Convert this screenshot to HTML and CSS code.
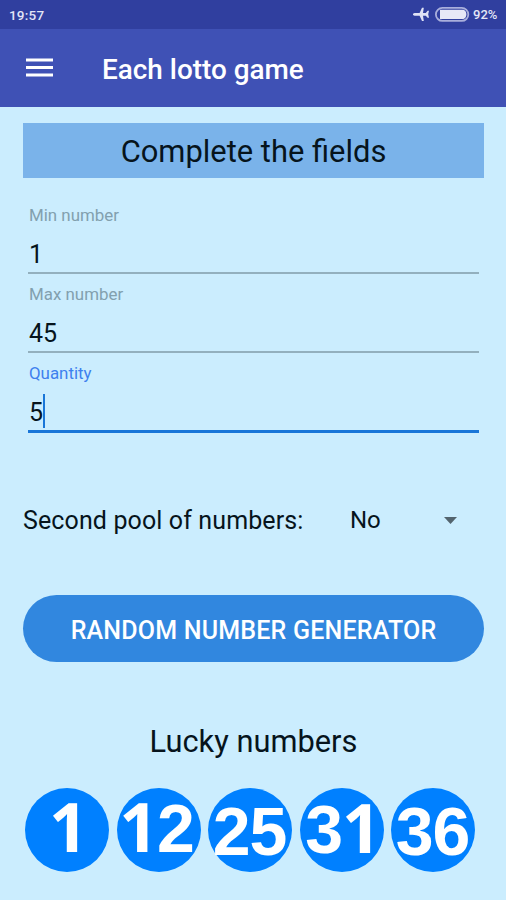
FILE: index.html
```html
<!DOCTYPE html>
<html lang="en">
<head>
<meta charset="utf-8">
<title>Each lotto game</title>
<link rel="stylesheet" href="styles.css">
</head>
<body>
<div class="status">
  <span class="clock">19:57</span>
  <svg class="plane" width="17" height="15" viewBox="0 0 17 15"><path d="M0 6.8 L1.5 6 H6.6 L9 0.8 H10.8 L10 6 H12.8 L14.6 3.8 H16 L15.2 7.3 L16 10.8 H14.6 L12.8 8.8 H10 L10.8 14 H9 L6.6 8.8 H1.5 L0 8 Z" fill="#dfe2f5"/></svg>
  <svg class="battery" width="35" height="15" viewBox="0 0 35 15"><rect x="0.9" y="0.9" width="32.4" height="13" rx="6.5" fill="none" stroke="#a9afdc" stroke-width="1.8"/><path d="M5 2.8H28.5Q31.4 4 31.4 7.4T28.5 12H5Z" fill="#e6e8f6"/></svg>
  <span class="level">92%</span>
</div>
<header class="bar">
  <svg class="menu" width="27" height="20" viewBox="0 0 27 20"><path d="M0 2H27M0 9.5H27M0 17H27" stroke="#fff" stroke-width="3.2"/></svg>
  <h1 class="title">Each lotto game</h1>
</header>
<main class="content">
  <h2 class="heading">Complete the fields</h2>
  <form class="fields">
    <div class="field"><label class="label">Min number</label><div class="value">1</div></div>
    <div class="field"><label class="label">Max number</label><div class="value">45</div></div>
    <div class="field active"><label class="label">Quantity</label><div class="value">5<i class="caret"></i></div></div>
  </form>
  <div class="pool">
    <span class="question">Second pool of numbers:</span>
    <span class="answer">No</span>
    <svg class="arrow" width="13" height="7" viewBox="0 0 13 7"><path d="M0 0H13L6.5 7Z" fill="#53646e"/></svg>
  </div>
  <div class="button">RANDOM NUMBER GENERATOR</div>
  <h2 class="lucky">Lucky numbers</h2>
  <div class="balls">
    <div class="ball high single"><span><b class="one">1</b></span></div>
    <div class="ball high pair"><span><b class="one">1</b>2</span></div>
    <div class="ball low"><span>25</span></div>
    <div class="ball single"><span>3<b class="one">1</b></span></div>
    <div class="ball low"><span>36</span></div>
  </div>
</main>
</body>
</html>
```
FILE: styles.css
```css
* { box-sizing: border-box; }
body {
  margin: 0;
  height: 900px;
  overflow: hidden;
  background: #cbedfe;
  color: #06141c;
  font-family: Roboto, "Liberation Sans", sans-serif;
}
h1, h2 { margin: 0; font-weight: 400; white-space: nowrap; }
svg { display: block; flex: none; }
.status {
  display: flex;
  align-items: center;
  height: 29px;
  padding: 0 8px 0 9px;
  background: #303f9f;
  color: #e3e6f6;
  font-size: 13.5px;
  font-weight: 500;
}
.clock { margin-right: auto; letter-spacing: 0.2px; }
.plane { margin-right: 5px; }
.battery { margin-right: 3px; }
.level { width: 25px; font-size: 13px; white-space: nowrap; }
.bar {
  display: flex;
  align-items: center;
  height: 78px;
  padding: 2px 0 0 26px;
  background: #3f51b5;
}
.menu { margin-bottom: 2px; }
.title {
  margin-left: 49px;
  color: #fff;
  font-size: 27.9px;
  font-weight: 500;
}
.content { padding: 16px 22px 0 23px; }
.heading {
  height: 55px;
  line-height: 57px;
  background: #7ab3ea;
  font-size: 30.9px;
  text-align: center;
}
.fields { padding: 17px 5px 0; }
.field {
  height: 79px;
  border-bottom: 2px solid #93b0be;
}
.label {
  display: block;
  padding: 9px 0 0 1px;
  height: 40px;
  line-height: 22px;
  color: #82a0ae;
  font-size: 16.9px;
}
.value {
  display: flex;
  align-items: center;
  height: 37px;
  padding: 1px 0 0 1px;
  font-size: 25px;
}
.active { border-bottom: 3px solid #1976d8; height: 80px; }
.active .label { color: #3e80ee; }
.caret { width: 2px; height: 34px; margin-bottom: 2px; background: #1976d8; }
.pool {
  display: flex;
  align-items: center;
  height: 40px;
  margin-top: 67px;
  font-size: 25px;
  white-space: nowrap;
}
.question { width: 327px; letter-spacing: 0.12px; }
.answer { width: 94px; font-size: 24px; }
.button {
  height: 67px;
  margin-top: 55px;
  border-radius: 34px;
  background: #3187df;
  color: #fff;
  font-size: 25px;
  font-weight: 500;
  letter-spacing: 0.2px;
  line-height: 71px;
  text-align: center;
  white-space: nowrap;
}
.lucky {
  height: 50px;
  margin-top: 54px;
  line-height: 52px;
  font-size: 30.8px;
  text-align: center;
}
.balls { display: flex; gap: 7.5px; margin: 22.4px 0 0 2px; }
.ball {
  display: flex;
  justify-content: center;
  flex: none;
  width: 84px;
  height: 84px;
  padding-right: 1px;
  border-radius: 50%;
  background: #0080ff;
  color: #fff;
  font: bold 68px/82px "Liberation Sans", sans-serif;
  letter-spacing: -1px;
}
.one { font: bold 68px/0 "Open Sans", sans-serif; }
.high { line-height: 81px; }
.low { line-height: 86px; }
.single { padding: 0 0 0 2px; }
.pair { padding-right: 4px; }
```
